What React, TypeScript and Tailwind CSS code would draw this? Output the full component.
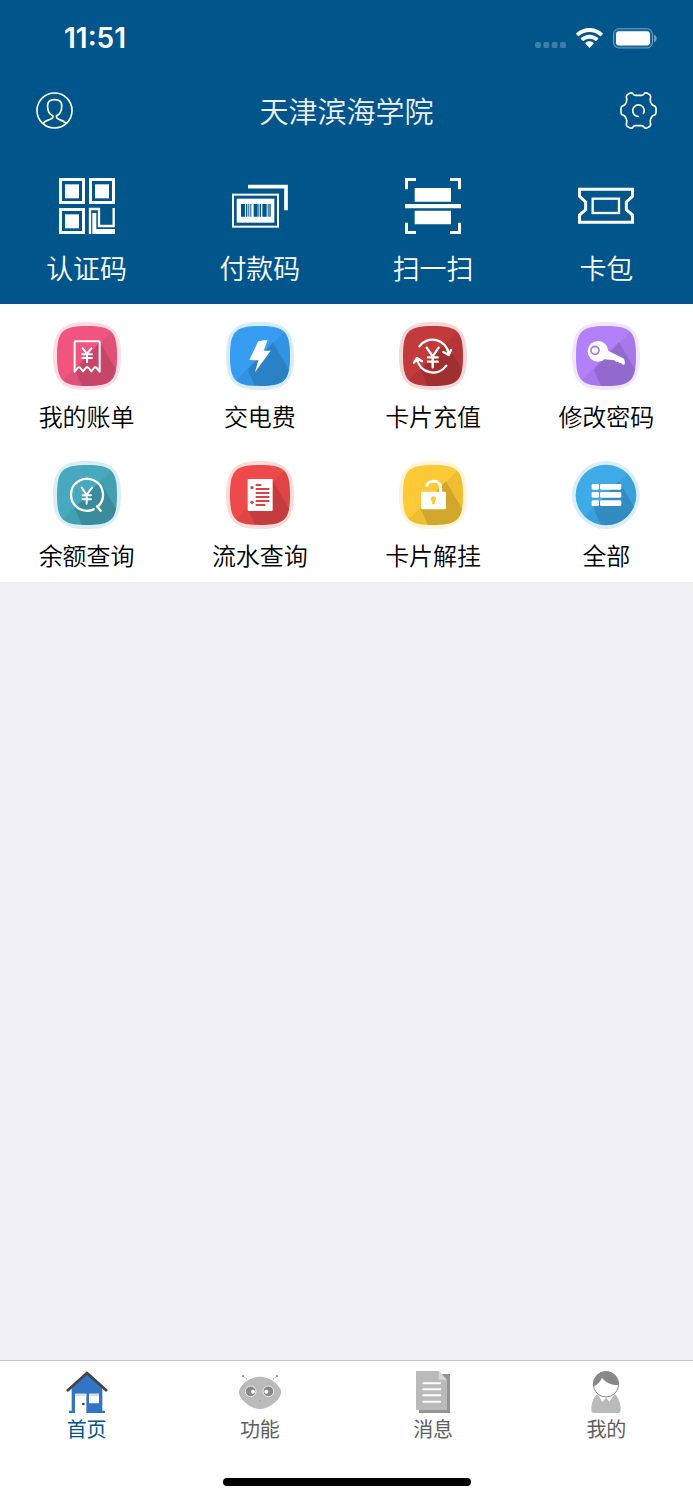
import { useId, type ReactNode } from "react";

const quickActions = [
  { label: "认证码", icon: <QrIcon /> },
  { label: "付款码", icon: <BarcodeIcon /> },
  { label: "扫一扫", icon: <ScanIcon /> },
  { label: "卡包", icon: <TicketIcon /> },
];

const services = [
  { label: "我的账单", color: "#f05580", glyph: <BillGlyph /> },
  { label: "交电费", color: "#369df1", glyph: <BoltGlyph /> },
  { label: "卡片充值", color: "#c23a3b", glyph: <RechargeGlyph /> },
  { label: "修改密码", color: "#b280f8", glyph: <KeyGlyph /> },
  { label: "余额查询", color: "#48a9be", glyph: <BalanceGlyph /> },
  { label: "流水查询", color: "#ee4a4b", glyph: <StatementGlyph /> },
  { label: "卡片解挂", color: "#fdc936", glyph: <UnlockGlyph /> },
  { label: "全部", color: "#3eaae8", glyph: <ListGlyph />, round: true },
];

const tabs = [
  { label: "首页", icon: <HomeIcon />, active: true },
  { label: "功能", icon: <RobotIcon />, active: false },
  { label: "消息", icon: <NoteIcon />, active: false },
  { label: "我的", icon: <PersonIcon />, active: false },
];

/* ---------- status bar ---------- */

function StatusBar() {
  return (
    <div className="flex h-[76px] items-center justify-between pr-9 pl-16">
      <span className="font-['Inter',sans-serif] text-[28px] leading-8 font-semibold">
        11:51
      </span>
      <div className="flex items-center" aria-hidden="true">
        <svg viewBox="0 0 93 60" className="mr-2.5 h-5 w-[31px]">
          {[0, 25, 50, 75].map((x) => (
            <rect key={x} x={x} y="42" width="18" height="18" rx="6" fill="#fff" fillOpacity="0.25" />
          ))}
        </svg>
        <svg viewBox="0 0 81 60" className="mr-2.5 h-5 w-[27px]" fill="#fff">
          <path d="M40.500 0C56 0 70 6 80 16q1.500 1.500 0 3l-5 5q-1.500 1.500-3 0C63 16 52 12 40.500 12S18 16 9 24q-1.500 1.500-3 0l-5-5q-1.500-1.500 0-3C11 6 25 0 40.500 0Z" />
          <path d="M40.500 20c10 0 19 4 26 10q1.500 1.500 0 3l-5.500 5.500q-1.500 1.500-3 0C53 34 47 32 40.500 32S28 34 23 38.500q-1.500 1.500-3 0L14.500 33q-1.500-1.500 0-3c7-6 16-10 26-10Z" />
          <path d="M40.500 40c5 0 9 2 12 4.500q1.500 1.500 0 3L42 58.500q-1.500 1.500-3 0L28.500 47.500q-1.500-1.500 0-3c3-2.500 7-4.500 12-4.500Z" />
        </svg>
        <svg viewBox="0 0 132 62" className="h-[21px] w-11">
          <rect x="1.500" y="1.500" width="117" height="58" rx="16" fill="#fff" fillOpacity="0.1" stroke="#fff" strokeOpacity="0.4" strokeWidth="3" />
          <rect x="9" y="9" width="102" height="43" rx="9" fill="#fff" />
          <path d="M123 20c5 2 8 6 8 11s-3 9-8 11Z" fill="#fff" fillOpacity="0.45" />
        </svg>
      </div>
    </div>
  );
}

/* ---------- header icons ---------- */

function UserIcon() {
  return (
    <svg viewBox="0 0 112 112" className="size-[37px]" fill="none" stroke="#fff" strokeWidth="5" aria-hidden="true">
      <circle cx="56" cy="56" r="53" />
      <path d="M22 95C29 82 51 86 51 76V72C40 67 35 54 35 42 35 29 43 23 56.500 23S78 29 78 42C78 54 73 67 62 72V76C62 86 83 82 90 95" />
    </svg>
  );
}

function GearIcon() {
  return (
    <svg viewBox="0 0 112 112" className="size-[37px]" fill="none" stroke="#fff" strokeWidth="5" strokeLinejoin="round" aria-hidden="true">
      <path d="M27 5Q33 1 38 4 41 10 47 10H65Q71 10 74 4 79 1 85 5 93 8 93 15 90 22 93 31 97 42 106 43 110 47 109 56 110 65 106 69 97 70 93 81 90 90 93 97 93 104 85 107 79 111 74 108 71 102 65 102H47Q41 102 38 108 33 111 27 107 19 104 19 97 22 90 19 81 15 70 6 69 2 65 3 56 2 47 6 43 15 42 19 31 22 22 19 15 19 8 27 5Z" />
      <path d="M58 74A17.500 17.500 0 1 1 70 67" />
    </svg>
  );
}

function QrIcon() {
  return (
    <svg viewBox="0 0 168 168" className="size-14" aria-hidden="true">
      {[
        [0, 0],
        [90, 0],
        [0, 90],
      ].map(([x, y]) => (
        <g key={`${x}-${y}`}>
          <rect x={x + 4.5} y={y + 4.5} width="69" height="69" fill="none" stroke="#fff" strokeWidth="9" />
          <rect x={x + 18} y={y + 19} width="42" height="42" fill="#fff" />
        </g>
      ))}
      <path d="M93 168V93H120V144H164V90" fill="none" stroke="#fff" strokeWidth="7" />
      <path d="M100 105H112V153H168V168H100Z" fill="#fff" />
    </svg>
  );
}

function BarcodeIcon() {
  return (
    <svg viewBox="0 0 168 168" className="size-14" aria-hidden="true">
      <path d="M48 26H162V97" fill="none" stroke="#fff" strokeWidth="11" />
      <rect x="3" y="50" width="135" height="96" fill="none" stroke="#fff" strokeWidth="6" />
      <rect x="14" y="62" width="113" height="72" fill="#fff" />
      <path
        d="M27 78h12v38H27ZM42 78h4v38h-4ZM49 78h3v38h-3ZM55 78h3v38h-3ZM65 78h12v38H65ZM79 78h3v38h-3ZM84 78h3v38h-3ZM91 78h13v38H91ZM107 78h3v38h-3ZM112 78h4v38h-4Z"
        fill="#00558b"
      />
    </svg>
  );
}

function ScanIcon() {
  return (
    <svg viewBox="0 0 168 168" className="size-14" aria-hidden="true">
      <path
        d="M4.500 34V4.500H33M135 4.500H163.500V34M163.500 134V163.500H135M33 163.500H4.500V134"
        fill="none"
        stroke="#fff"
        strokeWidth="9"
      />
      <path d="M29 30H138V71H29ZM0 78H168V91H0ZM29 98H138V139H29Z" fill="#fff" />
    </svg>
  );
}

function TicketIcon() {
  return (
    <svg viewBox="0 0 168 168" className="size-14" fill="none" stroke="#fff" aria-hidden="true">
      <path d="M4.500 33.500H163.500V55L145 72V95L163.500 111V132.500H4.500V111L23 95V72L4.500 55Z" strokeWidth="9" />
      <rect x="44" y="62" width="79" height="43" strokeWidth="7" />
    </svg>
  );
}

/* ---------- service tiles ---------- */

const OUTER = "M102 0C178 0 204 26 204 102S178 204 102 204 0 178 0 102 26 0 102 0Z";
const INNER = "M102 12C176 12 192 28 192 102S176 192 102 192 12 176 12 102 28 12 102 12Z";

function Tile({ color, round, children }: { color: string; round?: boolean; children: ReactNode }) {
  const id = useId();
  return (
    <svg viewBox="0 0 204 204" className="size-[68px]" aria-hidden="true">
      <clipPath id={id}>
        {round ? <circle cx="102" cy="102" r="91" /> : <path d={INNER} />}
      </clipPath>
      {round ? (
        <circle cx="102" cy="102" r="102" fill={color} fillOpacity="0.2" />
      ) : (
        <path d={OUTER} fill={color} fillOpacity="0.2" />
      )}
      <g clipPath={`url(#${id})`}>
        <rect width="204" height="204" fill={color} />
        <path d="M204 0V204H0Z" fillOpacity="0.06" />
        <path d="M65 143L140 60 204 168V204H92Z" fillOpacity="0.12" />
      </g>
      {children}
    </svg>
  );
}

function BillGlyph() {
  return (
    <g fill="none" stroke="#fff" strokeWidth="6" strokeLinecap="round" strokeLinejoin="round">
      <path d="M65 149V61Q65 58 68 58H137Q140 58 140 61V149L131 138Q127 133 123 138L115 148 107 138Q102 133 98 138L90 148 82 138Q78 133 74 138Z" />
      <path d="M89 79L102 95 115 79M102 95V121M88 97H117M88 108H117" />
    </g>
  );
}

function BoltGlyph() {
  return <path d="M97 57L125 54 113 86 134 86 87 151 97 115 70 114Z" fill="#fff" />;
}

function RechargeGlyph() {
  return (
    <g fill="none" stroke="#fff" strokeWidth="7" strokeLinecap="round" strokeLinejoin="round">
      <path d="M61 73A49 49 0 0 1 149 95M133 90L149 99 156 84" />
      <path d="M142 131A49 49 0 0 1 54 112M45 122L54 108 69 118" />
      <path d="M83 77L101 103 119 77M101 103V136M87 106H116M87 119H116" />
    </g>
  );
}

function KeyGlyph() {
  return (
    <>
      <circle cx="78" cy="88" r="31" fill="#fff" />
      <path d="M104 84L156 110Q161 119 157 129L150 127 147 123 142 124 138 119 133 120 127 115 98 112Z" fill="#fff" />
      <circle cx="69" cy="85" r="12" fill="none" stroke="#a578e8" strokeWidth="5" />
    </>
  );
}

function BalanceGlyph() {
  return (
    <g fill="none" stroke="#fff" strokeWidth="7" strokeLinecap="round" strokeLinejoin="round">
      <path d="M133 138A48 48 0 1 0 122 145M132 136L143 149" />
      <path d="M86 80L101 102 117 80M101 102V128M89 103H114M89 115H114" strokeWidth="6" />
    </g>
  );
}

function StatementGlyph() {
  return (
    <>
      <rect x="65" y="54" width="75" height="96" rx="3" fill="#fff" />
      <path d="M89 72H106M89 84H130M89 96H130M89 108H130M89 120H130M89 132H118" stroke="#d64344" strokeWidth="6" />
      <circle cx="78" cy="80" r="5" fill="#d64344" />
      <circle cx="78" cy="124" r="5" fill="#d64344" />
    </>
  );
}

function UnlockGlyph() {
  return (
    <>
      <rect x="66" y="92" width="75" height="53" rx="4" fill="#fff" />
      <path d="M83 77C84 66 94 61 104 61 117 61 125 69 125 81V94" fill="none" stroke="#fff" strokeWidth="9" />
      <path d="M103 106c5 0 8 4 8 8 0 3-2 5-3 7l-1 8q-4 2-8 0l-1-8c-1-2-3-4-3-7 0-4 3-8 8-8Z" fill="#fdc936" />
    </>
  );
}

function ListGlyph() {
  return (
    <g fill="#fff">
      {[69, 93, 118].map((y) => (
        <g key={y}>
          <rect x="59" y={y} width="22" height="17" rx="4" />
          <rect x="84" y={y} width="64" height="17" rx="4" />
        </g>
      ))}
    </g>
  );
}

/* ---------- tab bar icons ---------- */

function HomeIcon() {
  return (
    <svg viewBox="0 0 126 126" className="size-[42px]" aria-hidden="true">
      <path d="M63 8L109 50V119H117V126H9V119H17V50Z" fill="#3375c5" />
      <path d="M27 68H61V126H27ZM69 68H99V97H69Z" fill="#fff" />
      <path d="M27 68H61V76H27ZM69 68H99V76H69Z" fill="#dedede" />
      <circle cx="52" cy="99" r="4" fill="#444" />
      <path d="M3 60L63 6 123 60" fill="none" stroke="#444" strokeWidth="8" strokeLinejoin="round" />
    </svg>
  );
}

function RobotIcon() {
  return (
    <svg viewBox="0 0 126 126" className="size-[42px]" aria-hidden="true">
      <path d="M25 26L12 15M101 26L114 15" stroke="#999" strokeWidth="3" strokeDasharray="7 3" />
      <circle cx="12" cy="15" r="3" fill="#888" />
      <circle cx="114" cy="15" r="3" fill="#888" />
      <path d="M0 63C0 46 30 17 63 17S126 46 126 63C126 88 87 114 63 114S0 88 0 63Z" fill="#bababa" />
      <circle cx="35" cy="61" r="16" fill="#888" stroke="#eee" strokeWidth="3" />
      <circle cx="88" cy="61" r="16" fill="#888" stroke="#eee" strokeWidth="3" />
      <circle cx="42" cy="62" r="6" fill="#fff" />
      <circle cx="82" cy="62" r="6" fill="#fff" />
      <circle cx="63" cy="90" r="3" fill="#a2a2a2" />
    </svg>
  );
}

function NoteIcon() {
  return (
    <svg viewBox="0 0 126 126" className="size-[42px]" aria-hidden="true">
      <path d="M21 9H114V126H21Z" fill="#949494" />
      <path d="M12 0H80L105 26V117H12Z" fill="#bababa" />
      <path d="M80 0L105 26H80Z" fill="#d6d6d6" />
      <path d="M31 37H87M31 55H87M31 73H87M31 92H87" stroke="#fff" strokeWidth="6" />
    </svg>
  );
}

function PersonIcon() {
  return (
    <svg viewBox="0 0 126 126" className="size-[42px]" aria-hidden="true">
      <path d="M36 70H90C102 82 107 98 107 117Q107 126 98 126H28Q19 126 19 117C19 98 24 82 36 70Z" fill="#bababa" />
      <path d="M38 70L52 93 63 80 73 92 88 70Z" fill="#fff" />
      <circle cx="63" cy="40" r="38" fill="#fff" stroke="#888" strokeWidth="3" />
      <path d="M25 46C22 20 40 1 63 1S102 20 101 42C82 43 62 36 51 20 45 34 36 42 25 46Z" fill="#888" />
    </svg>
  );
}

/* ---------- page ---------- */

export default function App() {
  return (
    <div className="flex min-h-screen flex-col bg-[#efeff4] font-['Noto_Sans_CJK_SC',sans-serif]">
      <header className="bg-[#00558b] text-white">
        <StatusBar />
        <div className="flex h-[68px] items-center justify-between px-9">
          <button type="button" aria-label="个人中心">
            <UserIcon />
          </button>
          <h1 className="text-[29px] leading-10 font-[350] text-[#f0f0f0]">天津滨海学院</h1>
          <button type="button" aria-label="设置">
            <GearIcon />
          </button>
        </div>
        <div className="grid grid-cols-4 pt-[34px] pb-4">
          {quickActions.map((a) => (
            <button key={a.label} type="button" className="flex flex-col items-center gap-3.5">
              {a.icon}
              <span className="text-[27px] leading-10 font-[350]">{a.label}</span>
            </button>
          ))}
        </div>
      </header>

      <main className="flex-1">
        <div className="grid grid-cols-4 bg-white">
          {services.map((s) => (
            <button key={s.label} type="button" className="flex flex-col items-center gap-2 pt-[18px] pb-[9px]">
              <Tile color={s.color} round={s.round}>
                {s.glyph}
              </Tile>
              <span className="text-2xl leading-9 font-[350] text-black">{s.label}</span>
            </button>
          ))}
        </div>
      </main>

      <nav className="border-t border-[#c4c4ca] bg-white">
        <div className="grid grid-cols-4 pt-2.5">
          {tabs.map((t) => (
            <a
              key={t.label}
              href="#"
              aria-current={t.active ? "page" : undefined}
              className={`flex flex-col items-center text-xl leading-8 ${
                t.active ? "text-[#00558b]" : "text-[#5e5e5e]"
              }`}
            >
              {t.icon}
              {t.label}
            </a>
          ))}
        </div>
        <div className="mx-auto mt-[33px] mb-3.5 h-2 w-[248px] rounded-full bg-black" />
      </nav>
    </div>
  );
}
